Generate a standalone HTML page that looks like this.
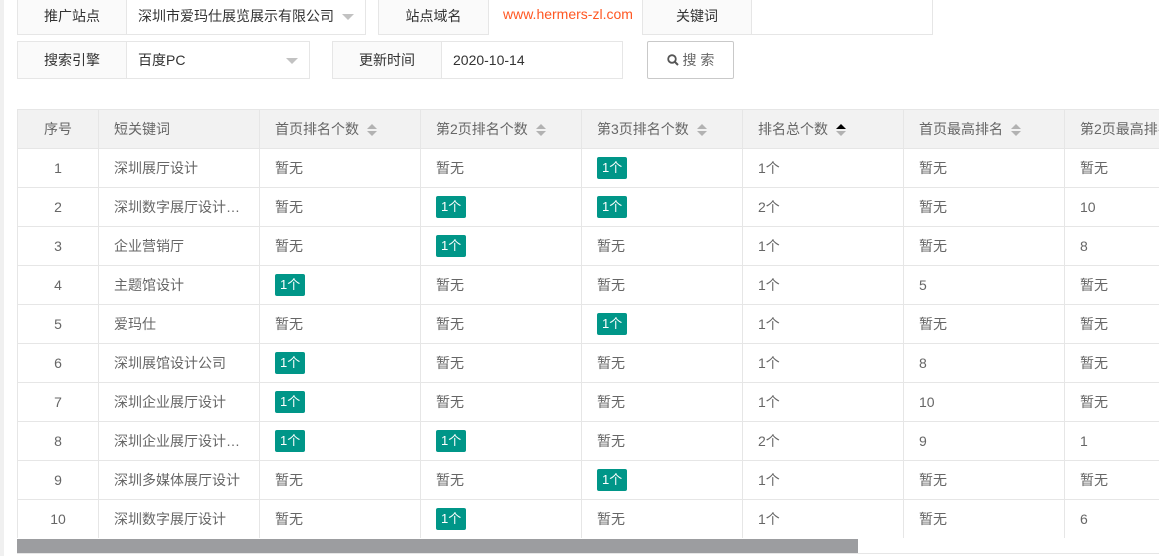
<html><head><style>
body{margin:0;width:1164px;height:556px;background:#fff;font-family:"Liberation Sans","Noto Sans CJK SC",sans-serif;font-size:14px;color:#333;position:relative;overflow:hidden}
.strip{position:absolute;left:0;top:0;width:4px;height:556px;background:#f0f0f0}
.b{position:absolute;box-sizing:border-box;border:1px solid #e6e6e6;height:38px;line-height:36px}
.lab{background:#fafafa;text-align:center;color:#333}
.val{padding-left:11px;background:#fff}
.arr{position:absolute;right:11px;top:16px;width:0;height:0;border:6px solid transparent;border-top:6px solid #c2c2c2;border-bottom:0}
table{position:absolute;left:17px;top:109px;border-collapse:collapse;table-layout:fixed;width:1170px}
td,th{border:1px solid #e6e6e6;height:39px;box-sizing:border-box;padding:0 0 0 15px;font-weight:normal;text-align:left;white-space:nowrap;overflow:hidden;color:#666;font-size:14px}
th{background:#f2f2f2;color:#666}
td.c,th.c{text-align:center;padding:0}
.tag{display:inline-block;background:#009688;color:#fff;height:22px;line-height:22px;padding:0 5px;border-radius:2px;font-size:13px}
.s{display:inline-block;vertical-align:middle;margin-left:8px;position:relative;width:10px;height:14px}
.s:before{content:"";position:absolute;left:0;top:1px;border:5px solid transparent;border-bottom:5px solid #b2b2b2;border-top:0}
.s:after{content:"";position:absolute;left:0;top:8px;border:5px solid transparent;border-top:5px solid #b2b2b2;border-bottom:0}
.s.up:before{border-bottom-color:#000}
</style></head><body>
<div class="strip"></div>
<div class="b lab" style="left:17px;top:-3px;width:110px">推广站点</div>
<div class="b val" style="left:126px;top:-3px;width:240px">深圳市爱玛仕展览展示有限公司<span class="arr"></span></div>
<div class="b lab" style="left:378px;top:-3px;width:111px">站点域名</div>
<div style="position:absolute;left:503px;top:6px;color:#ff5722;font-size:14px">www.hermers-zl.com</div>
<div class="b lab" style="left:642px;top:-3px;width:110px">关键词</div>
<div class="b val" style="left:751px;top:-3px;width:182px"></div>
<div class="b lab" style="left:17px;top:41px;width:110px">搜索引擎</div>
<div class="b val" style="left:126px;top:41px;width:184px">百度PC<span class="arr"></span></div>
<div class="b lab" style="left:332px;top:41px;width:110px">更新时间</div>
<div class="b val" style="left:441px;top:41px;width:182px;color:#333">2020-10-14</div>
<div class="b" style="left:647px;top:41px;width:87px;text-align:center;border-color:#c9c9c9;color:#666;border-radius:2px"><svg width="12" height="12" viewBox="0 0 12 12" style="vertical-align:-1px"><circle cx="5" cy="5" r="3.8" fill="none" stroke="#555" stroke-width="1.8"/><path d="M7.8 7.8L11 11" stroke="#555" stroke-width="2"/></svg> 搜 索</div>
<table>
<colgroup><col style="width:81px"><col style="width:161px"><col style="width:161px"><col style="width:161px"><col style="width:161px"><col style="width:161px"><col style="width:161px"><col style="width:123px"></colgroup>
<tr><th class="c">序号</th><th>短关键词</th><th>首页排名个数<span class="s"></span></th><th>第2页排名个数<span class="s"></span></th><th>第3页排名个数<span class="s"></span></th><th>排名总个数<span class="s up"></span></th><th>首页最高排名<span class="s"></span></th><th>第2页最高排名</th></tr>
<tr><td class="c">1</td><td>深圳展厅设计</td><td>暂无</td><td>暂无</td><td><span class="tag">1个</span></td><td>1个</td><td>暂无</td><td>暂无</td></tr>
<tr><td class="c">2</td><td>深圳数字展厅设计…</td><td>暂无</td><td><span class="tag">1个</span></td><td><span class="tag">1个</span></td><td>2个</td><td>暂无</td><td>10</td></tr>
<tr><td class="c">3</td><td>企业营销厅</td><td>暂无</td><td><span class="tag">1个</span></td><td>暂无</td><td>1个</td><td>暂无</td><td>8</td></tr>
<tr><td class="c">4</td><td>主题馆设计</td><td><span class="tag">1个</span></td><td>暂无</td><td>暂无</td><td>1个</td><td>5</td><td>暂无</td></tr>
<tr><td class="c">5</td><td>爱玛仕</td><td>暂无</td><td>暂无</td><td><span class="tag">1个</span></td><td>1个</td><td>暂无</td><td>暂无</td></tr>
<tr><td class="c">6</td><td>深圳展馆设计公司</td><td><span class="tag">1个</span></td><td>暂无</td><td>暂无</td><td>1个</td><td>8</td><td>暂无</td></tr>
<tr><td class="c">7</td><td>深圳企业展厅设计</td><td><span class="tag">1个</span></td><td>暂无</td><td>暂无</td><td>1个</td><td>10</td><td>暂无</td></tr>
<tr><td class="c">8</td><td>深圳企业展厅设计…</td><td><span class="tag">1个</span></td><td><span class="tag">1个</span></td><td>暂无</td><td>2个</td><td>9</td><td>1</td></tr>
<tr><td class="c">9</td><td>深圳多媒体展厅设计</td><td>暂无</td><td>暂无</td><td><span class="tag">1个</span></td><td>1个</td><td>暂无</td><td>暂无</td></tr>
<tr><td class="c">10</td><td>深圳数字展厅设计</td><td>暂无</td><td><span class="tag">1个</span></td><td>暂无</td><td>1个</td><td>暂无</td><td>6</td></tr>
</table>
<div style="position:absolute;left:17px;top:538px;width:1142px;height:15px;border-bottom:1px solid #e6e6e6;background:#fff"></div>
<div style="position:absolute;left:17px;top:539px;width:841px;height:14px;background:#9c9da0"></div>
<div style="position:absolute;left:1159px;top:0;width:5px;height:556px;background:#fff"></div>
</body></html>
